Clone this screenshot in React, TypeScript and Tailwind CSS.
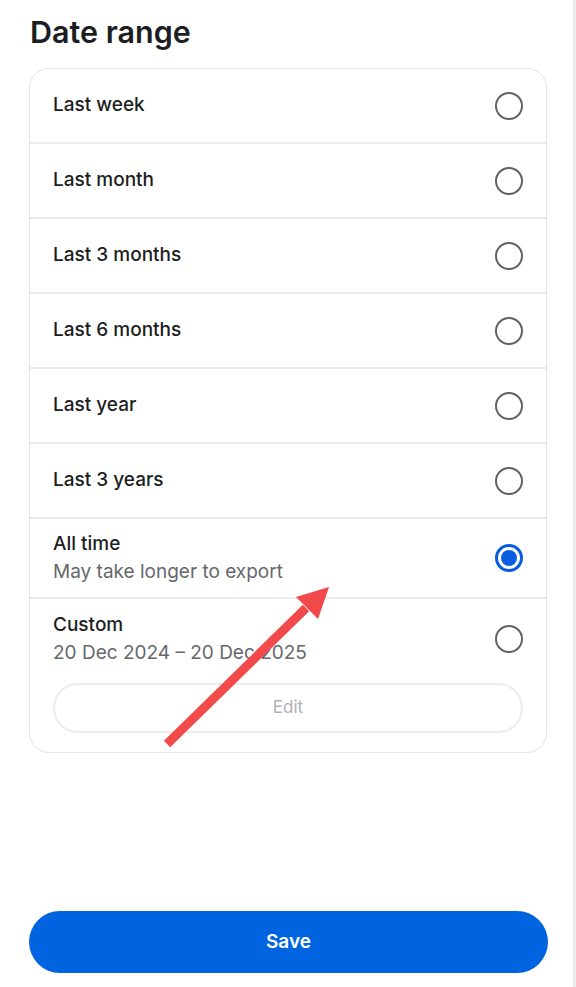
import React from "react";

const options = [
  { label: "Last week" },
  { label: "Last month" },
  { label: "Last 3 months" },
  { label: "Last 6 months" },
  { label: "Last year" },
  { label: "Last 3 years" },
];

function Radio({ checked }: { checked?: boolean }) {
  if (checked) {
    return (
      <div className="flex h-[28px] w-[28px] items-center justify-center rounded-full border-[3px] border-[#0a5ce0]">
        <div className="h-[16px] w-[16px] rounded-full bg-[#0a5ce0]" />
      </div>
    );
  }
  return <div className="h-[28px] w-[28px] rounded-full border-[2.5px] border-[#606266]" />;
}

export default function App() {
  return (
    <div
      className="relative h-[987px] w-[576px] overflow-hidden border-r-[3px] border-[#ececec] bg-white"
      style={{ fontFamily: "Inter, 'Noto Sans', sans-serif" }}
    >
      <div className="flex h-full flex-col px-[29px]">
        <h1 className="mt-[14px] pl-[1px] text-[30.5px] font-semibold leading-[36px] text-[#1c1e21]">
          Date range
        </h1>

        <div className="mt-[18px] w-[518px] overflow-hidden rounded-[20px] border border-[#e4e4e4]">
          {options.map((o) => (
            <div
              key={o.label}
              className="flex h-[75px] items-center justify-between border-b-2 border-[#ececec] pl-[23px] pr-[23px]"
            >
              <span className="text-[19px] font-medium text-[#1c1e21]">{o.label}</span>
              <Radio />
            </div>
          ))}

          <div className="flex h-[80px] items-center justify-between border-b-2 border-[#ececec] pl-[23px] pr-[23px]">
            <div className="flex flex-col">
              <span className="text-[19px] font-medium leading-[28px] text-[#1c1e21]">All time</span>
              <span className="text-[19px] leading-[28px] text-[#65676b]">May take longer to export</span>
            </div>
            <Radio checked />
          </div>

          <div className="flex flex-col pb-[19px] pl-[23px] pr-[23px] pt-[12px]">
            <div className="flex items-center justify-between">
              <div className="flex flex-col">
                <span className="text-[19px] font-medium leading-[28px] text-[#1c1e21]">Custom</span>
                <span className="text-[19px] leading-[28px] text-[#65676b]">20 Dec 2024 – 20 Dec 2025</span>
              </div>
              <Radio />
            </div>
            <div className="mt-[16px] flex h-[50px] w-[470px] items-center justify-center rounded-full border-2 border-[#ececec] text-[17px] text-[#b0b3b8]">
              Edit
            </div>
          </div>
        </div>

        <div className="mt-auto mb-[14px] flex h-[62px] w-[519px] items-center justify-center rounded-full bg-[#0064e0] text-[19px] font-semibold text-white">
          Save
        </div>
      </div>

      <svg className="pointer-events-none absolute left-0 top-0" width="576" height="987">
        <line x1="167" y1="744" x2="306" y2="608" stroke="#f24a4a" strokeWidth="9" />
        <polygon points="329,587 296,597 318,619" fill="#f24a4a" />
      </svg>
    </div>
  );
}
